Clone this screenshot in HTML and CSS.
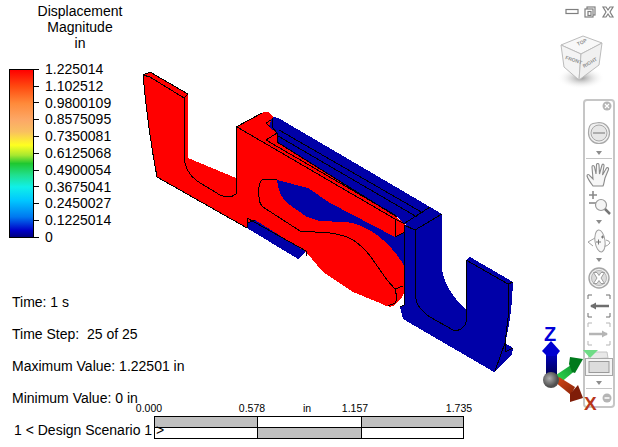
FILE: index.html
```html
<!DOCTYPE html>
<html lang="en">
<head>
<meta charset="utf-8">
<title>Displacement Magnitude</title>
<link rel="stylesheet" href="styles.css">
</head>
<body>
<main class="viewport">
  <svg class="canvas model" viewBox="0 0 618 447" aria-hidden="true">
    <path class="red" d="M143 75L150 72L188 94L188 158L236 178L237 127L262 113Q266 111 270 113L274 118L405 224L405 292L400 300L393 306Q388 308 380 303L353 292L323 272L306 252L247 228L157 177Q148 130 143 75Z"/>
    <path class="blue" d="M272 118Q275 116 280 119L442 214L415 230L405 224L397 217L277 142L277 133L269 127Z"/>
    <path class="blue" d="M277 180L308 188L330 203L395 237L405 232L405 267Q395 250 383 240Q373 231 363 227Q353 222 343 222L320 221L307 217L287 203Q279 196 277 180Z"/>
    <path class="blue" d="M442 214L442 270Q446 292 466 309L466 260L470 257L513 282L512 300Q510 325 505 343L513 348L512 355L494 372L403 319L400 307L404 305L404 225Z"/>
    <path class="blue" d="M247 223L255 220L306 252L298 259L247 228Z"/>
    <path class="line" d="M143 75L150 72L188 94L184 98L150 77L143 75M184 98V157Q185 172 197 181L220 195Q230 199 236 194Q237 190 236 178V127L262 113"/>
    <path class="line" d="M143 75Q148 130 157 177L247 228M247 218V228M247 218L306 251V256M247 223L255 220"/>
    <path class="line" d="M237 127L395 219V237L405 232M395 219L405 224M266 140L277 133M266 140L395 215M266 123L271 120M266 123L270 127"/>
    <path class="line" d="M279 130L423 213M278 136L417 217M277 142L397 217M272 118V127L277 133V142"/>
    <path class="line" d="M262 180Q258 183 259 197Q259 203 263 207L300 231L330 233Q345 235 353 240Q365 248 373 260L387 280L395 289L403 286M395 289Q398 300 395 303L388 306M262 180Q266 178 277 180"/>
    <path class="line" d="M404 225L415 230L442 214M404 225V305L400 307M405 223L430 207M415 230V287Q415 297 417 303Q421 311 430 317L453 330Q460 331 462 328Q466 325 466 322V260M466 260L508 284L513 282M508 284V318L505 343L495 371M505 352L513 348M505 343L505 352"/>
  </svg>

  <section class="readout">
    <h1 class="title">Displacement<br>Magnitude<br>in</h1>
    <div class="legend">
      <div class="ramp"></div>
      <ul class="values">
        <li class="value"><i class="tick"></i>1.225014</li>
        <li class="value"><i class="tick"></i>1.102512</li>
        <li class="value"><i class="tick"></i>0.9800109</li>
        <li class="value"><i class="tick"></i>0.8575095</li>
        <li class="value"><i class="tick"></i>0.7350081</li>
        <li class="value"><i class="tick"></i>0.6125068</li>
        <li class="value"><i class="tick"></i>0.4900054</li>
        <li class="value"><i class="tick"></i>0.3675041</li>
        <li class="value"><i class="tick"></i>0.2450027</li>
        <li class="value"><i class="tick"></i>0.1225014</li>
        <li class="value"><i class="tick"></i>0</li>
      </ul>
    </div>
    <div class="stats">
      <p class="stat">Time: 1 s</p>
      <p class="stat">Time Step: &nbsp;25 of 25</p>
      <p class="stat">Maximum Value: 1.22501 in</p>
      <p class="stat">Minimum Value: 0 in</p>
      <p class="stat">1 &lt; Design Scenario 1 &gt;</p>
    </div>
  </section>

  <div class="ruler">
    <div class="ruler-labels">
      <span class="rl rl-a">0.000</span>
      <span class="rl rl-b">0.578</span>
      <span class="rl rl-c">in</span>
      <span class="rl rl-d">1.157</span>
      <span class="rl rl-e">1.735</span>
    </div>
    <div class="ruler-bar">
      <i class="cell dark"></i><i class="cell"></i><i class="cell dark"></i>
      <i class="cell"></i><i class="cell dark"></i><i class="cell"></i>
    </div>
  </div>

  <div class="window-controls">
    <svg class="wc" viewBox="0 0 14 12"><rect x="1" y="3.500" width="12" height="4" class="g1"/></svg>
    <svg class="wc" viewBox="0 0 14 12"><rect x="4" y="1" width="8" height="8" class="g1"/><rect x="2" y="3" width="8" height="8" class="g1 wfill"/><rect x="5" y="5.500" width="3" height="4" class="g1"/></svg>
    <svg class="wc" viewBox="0 0 14 12"><path d="M2 1H5L7 4L9 1H12L9 6L12 11H9L7 8L5 11H2L5 6Z" class="g1"/></svg>
  </div>

  <svg class="cube" viewBox="556 30 54 60" aria-hidden="true">
    <defs>
      <radialGradient id="shadow"><stop offset="0" stop-color="#999"/><stop offset="1" stop-color="#fff" stop-opacity="0"/></radialGradient>
    </defs>
    <ellipse cx="581" cy="78" rx="24" ry="11" fill="url(#shadow)"/>
    <path d="M583 36L602 43L581 54L561 45Z" fill="#f8f8f8" stroke="#bcbcbc"/>
    <path d="M561 45L581 54L579 80L564 67Z" fill="#f4f4f4" stroke="#bcbcbc"/>
    <path d="M581 54L602 43L599 65L579 80Z" fill="#f0f0f0" stroke="#bcbcbc"/>
    <text class="cube-text" transform="translate(565 59) rotate(18)">FRONT</text>
    <text class="cube-text" transform="translate(584 68) rotate(-30)">RIGHT</text>
    <text class="cube-text" transform="translate(578 46) rotate(-25)">TOP</text>
  </svg>

  <nav class="nav-panel">
    <div class="tool t-head"><svg class="ic10" viewBox="0 0 10 10"><circle cx="5" cy="5" r="4.500" fill="#b5b5b5"/><path d="M3 3L7 7M7 3L3 7" stroke="#fff" stroke-width="1.200"/></svg></div>
    <div class="tool t-wheel"><svg class="ic24" viewBox="0 0 24 24"><path d="M12 1.500C18 1.500 22.500 6 22.500 12C22.500 18 18 22.500 12 22.500C6 22.500 1.500 18 1.500 12C1.500 7 3 3 6 2.500Z" fill="#f0f0f0" stroke="#a8a8a8" stroke-width="1.200"/><circle cx="12" cy="12" r="8" fill="#e6e6e6" stroke="#a8a8a8"/><path d="M6 12H18" stroke="#8e8e8e" stroke-width="1.300"/></svg></div>
    <div class="tool t-caret"><i class="caret"></i></div>
    <div class="tool t-rule"><i class="rule"></i></div>
    <div class="tool t-hand"><svg class="ic26" viewBox="0 0 26 26"><path d="M7 24C4 20 2 17 1 14C1 12 3 12 4 14L7 17L6 5C6 3 8 3 8.500 5L10 12L10.500 2.500C11 1 13 1 13 3L13.500 12L16 3C16.500 1.500 18.500 2 18 4L16.500 13L20.500 6C21.500 5 23 6 22.500 7.500L19 16C18 20 18 22 17 24Z" fill="#f6f6f6" stroke="#8a8a8a" stroke-width="1.100"/></svg></div>
    <div class="tool t-zoom"><svg class="ic26" viewBox="0 0 26 26"><path d="M3 5H11M7 1V9" stroke="#8a8a8a" stroke-width="1.600" fill="none"/><path d="M3 13H11" stroke="#8a8a8a" stroke-width="1.600"/><circle cx="15" cy="15" r="5.500" fill="#f5f5f5" stroke="#9a9a9a" stroke-width="1.200"/><path d="M19 19L24 24" stroke="#777" stroke-width="2.500"/></svg></div>
    <div class="tool t-caret2"><i class="caret"></i></div>
    <div class="tool t-orbit"><svg class="ic26" viewBox="0 0 26 26"><path d="M9 10L2 14L7 18M17 19Q22 18 24 15Q24 13 20 12" fill="none" stroke="#a0a0a0"/><ellipse cx="14" cy="13" rx="5" ry="11" fill="#f8f8f8" stroke="#a0a0a0" transform="rotate(-8 14 13)"/><path d="M10 14H15M12.500 11.500V16.500M15 9L18 9M16.500 7.500V10.500" stroke="#777"/></svg></div>
    <div class="tool t-caret2"><i class="caret"></i></div>
    <div class="tool t-look"><svg class="ic24" viewBox="0 0 24 24"><circle cx="12" cy="12" r="10" fill="#efefef" stroke="#a5a5a5" stroke-width="1.400"/><circle cx="12" cy="12" r="7.500" fill="#dcdcdc" stroke="#b8b8b8"/><path d="M6.500 6.500H10L12 9.500L14 6.500H17.500L14 12L17.500 17.500H14L12 14.500L10 17.500H6.500L10 12Z" fill="#fff" stroke="#8a8a8a" stroke-width=".8"/></svg></div>
    <div class="tool t-view"><svg class="ic24" viewBox="0 0 24 24"><path d="M1 5V1H5M19 1H23V5M1 19V23H5M19 23H23V19" class="bracket"/><path d="M4 12H22" stroke="#6e6e6e" stroke-width="2.500"/><path d="M9 8.500L3 12L9 15.500Z" fill="#6e6e6e"/></svg></div>
    <div class="tool t-next"><svg class="ic24" viewBox="0 0 24 24"><path d="M1 5V1H5M19 1H23V5M1 19V23H5M19 23H23V19" class="bracket pale"/><path d="M2 12H20" stroke="#b5b5b5" stroke-width="2.500"/><path d="M15 8.500L21 12L15 15.500Z" fill="#b5b5b5"/></svg></div>
    <div class="tool t-window"><svg class="ic-win" viewBox="0 0 28 28"><path d="M3 10L5 3L22 3L23 9Z" fill="#e8e8e8" stroke="#c4c4c4"/><rect x=".5" y="9.500" width="27" height="17" fill="#f4f4f4" stroke="#a8a8a8"/><rect x="4" y="12.500" width="20" height="11" fill="#dcdcdc" stroke="#9a9a9a"/></svg></div>
    <div class="tool t-caret3"><i class="caret"></i></div>
    <div class="tool t-rule2"><i class="rule"></i></div>
    <div class="tool t-foot"><svg class="ic10" viewBox="0 0 10 10"><circle cx="5" cy="5" r="4.500" fill="#b5b5b5"/><path d="M2.500 5H7.500" stroke="#fff" stroke-width="1.500"/></svg></div>
  </nav>

  <svg class="canvas triad" viewBox="0 0 618 447" aria-hidden="true">
    <defs>
      <linearGradient id="zShaft" x1="0" y1="0" x2="0" y2="1"><stop offset="0" stop-color="#0000c8"/><stop offset="1" stop-color="#000050"/></linearGradient>
      <linearGradient id="yShaft" x1="0" y1="1" x2="1" y2="0"><stop offset="0" stop-color="#30e050"/><stop offset="1" stop-color="#109030"/></linearGradient>
      <linearGradient id="xShaft" x1="0" y1="0" x2="1" y2="1"><stop offset="0" stop-color="#d84818"/><stop offset="1" stop-color="#8a2408"/></linearGradient>
      <radialGradient id="ball" cx=".4" cy=".4"><stop offset="0" stop-color="#b0b0b0"/><stop offset="1" stop-color="#505050"/></radialGradient>
    </defs>
    <path d="M583 350H598L590 358Z" fill="#6fdc86"/>
    <text class="axis axis-z" x="544" y="340.500">Z</text>
    <path d="M546 352H557V376H546Z" fill="url(#zShaft)"/>
    <path d="M551 341L560 351L556 356H547L542 351Z" fill="#0000d0"/>
    <path d="M556 375L574 363L577 369L559 384Z" fill="url(#yShaft)"/>
    <path d="M570 357L583 359L575 373L572 372L569 364Z" fill="#007a1c"/>
    <path d="M555 382L559 377L575 387L571 395Z" fill="url(#xShaft)"/>
    <path d="M578 385L583 398L570 402L570 394Z" fill="#7f1d08"/>
    <circle cx="551" cy="380" r="8" fill="url(#ball)"/>
    <text class="axis axis-x" x="584" y="410">X</text>
  </svg>
</main>
</body>
</html>
```

FILE: styles.css
```css
* { box-sizing: border-box; }

html, body {
  margin: 0;
  padding: 0;
  background: #fff;
}

.viewport {
  position: relative;
  width: 618px;
  height: 447px;
  overflow: hidden;
  background: #fff;
  color: #000;
  font-family: "Liberation Sans", Arial, sans-serif;
  font-size: 14px;
}

/* Free canvas layers */
.canvas {
  position: absolute;
  left: 0;
  top: 0;
  width: 618px;
  height: 447px;
}

.model { shape-rendering: crispEdges; }
.red { fill: #ff0000; }
.blue { fill: #0000a8; }
.line { fill: none; stroke: #000; stroke-width: 1; }

/* Left column */
.readout {
  position: relative;
  z-index: 2;
  width: 160px;
  padding-top: 3px;
}

.title {
  margin: 0;
  font-size: 14px;
  font-weight: 400;
  line-height: 16px;
  text-align: center;
}

.legend {
  display: flex;
  margin: 10px 0 0 9px;
}

.ramp {
  width: 25px;
  height: 169px;
  margin-top: 8px;
  border: 1px solid #000;
  background: linear-gradient(to bottom,
    #ff0000 0%, #ff4a10 10%, #ff8a3a 20%, #fca867 30%, #f9c060 37%,
    #ffff20 45%, #a8e830 51%, #20c830 56%, #20e090 63%, #10f0e8 70%,
    #00c8ff 78%, #0078f0 88%, #0000c8 96%, #000080 100%);
}

.values {
  margin: 0;
  padding: 0;
  list-style: none;
}

.value {
  display: flex;
  align-items: center;
  height: 16.8px;
  gap: 6px;
  line-height: 16.8px;
}

.tick {
  width: 5px;
  height: 1px;
  background: #000;
}

.stats {
  margin: 40px 0 0 12px;
  white-space: nowrap;
}

.stat {
  margin: 0;
  height: 32px;
  line-height: 32px;
}

.stat:last-child { margin-left: 2px; }

/* Distance ruler */
.ruler {
  position: absolute;
  left: 136px;
  top: 402px;
  width: 340px;
}

.ruler-labels {
  position: relative;
  height: 13px;
  font-size: 10.500px;
  line-height: 13px;
}

.rl { position: absolute; top: 0; transform: translateX(-50%); }
.rl-a { left: 13px; }
.rl-b { left: 116px; }
.rl-c { left: 171px; }
.rl-d { left: 219px; }
.rl-e { left: 323px; }

.ruler-bar {
  display: grid;
  grid-template-columns: 103px 104px 102px;
  grid-template-rows: 11px 11px;
  width: 310px;
  margin: 1px 0 0 18px;
  border-top: 1px solid #000;
  border-left: 1px solid #000;
}

.cell {
  border-right: 1px solid #000;
  border-bottom: 1px solid #000;
  background: #fff;
}

.cell.dark { background: #c0c0c0; }

/* Window controls */
.window-controls {
  position: absolute;
  right: 3px;
  top: 6px;
  display: flex;
  gap: 4px;
}

.wc { width: 14px; height: 12px; }
.g1 { fill: none; stroke: #7f7f7f; stroke-width: 1.200; }
.wfill { fill: #fff; }

/* View cube */
.cube {
  position: absolute;
  left: 556px;
  top: 30px;
  width: 54px;
  height: 60px;
}

.cube-text {
  font-family: "Liberation Sans", Arial, sans-serif;
  font-size: 5px;
  font-weight: 700;
  fill: #909090;
}

/* Navigation bar */
.nav-panel {
  position: absolute;
  left: 583px;
  top: 99px;
  display: flex;
  flex-direction: column;
  width: 32px;
  height: 309px;
  border: 2px solid #c6c6c6;
  border-radius: 4px;
  background: #fff;
}

.tool {
  display: flex;
  align-items: center;
  justify-content: center;
  flex: none;
}

.t-head { height: 15px; justify-content: flex-end; padding: 0 1px 5px 0; }
.t-foot { height: 17px; justify-content: flex-end; margin-right: 1px; }
.t-wheel { height: 33px; }
.t-caret { height: 7px; }
.t-rule { height: 4px; }
.t-hand { height: 29px; }
.t-zoom { height: 28px; }
.t-caret2 { height: 10px; }
.t-orbit { height: 28px; }
.t-look { height: 26px; }
.t-view { height: 30px; }
.t-next { height: 26px; }
.t-window { height: 32px; }
.t-caret3 { height: 8px; }
.t-rule2 { height: 2px; }

.ic10 { width: 10px; height: 10px; }
.ic24 { width: 24px; height: 24px; }
.ic26 { width: 26px; height: 26px; }
.ic-win { width: 28px; height: 28px; flex: none; }

.caret {
  width: 0;
  height: 0;
  border-left: 3.500px solid transparent;
  border-right: 3.500px solid transparent;
  border-top: 4px solid #8c8c8c;
}

.rule {
  width: 26px;
  height: 1px;
  background: #c6c6c6;
}

.bracket {
  fill: none;
  stroke: #6e6e6e;
  stroke-width: 1;
}

.bracket.pale { stroke: #b5b5b5; }

/* Axis triad */
.triad { z-index: 3; }

.axis {
  font-family: "Liberation Sans", Arial, sans-serif;
  font-weight: 700;
}

.axis-z { font-size: 20px; fill: #0000d8; }
.axis-x { font-size: 19px; fill: #b8371a; }
```
